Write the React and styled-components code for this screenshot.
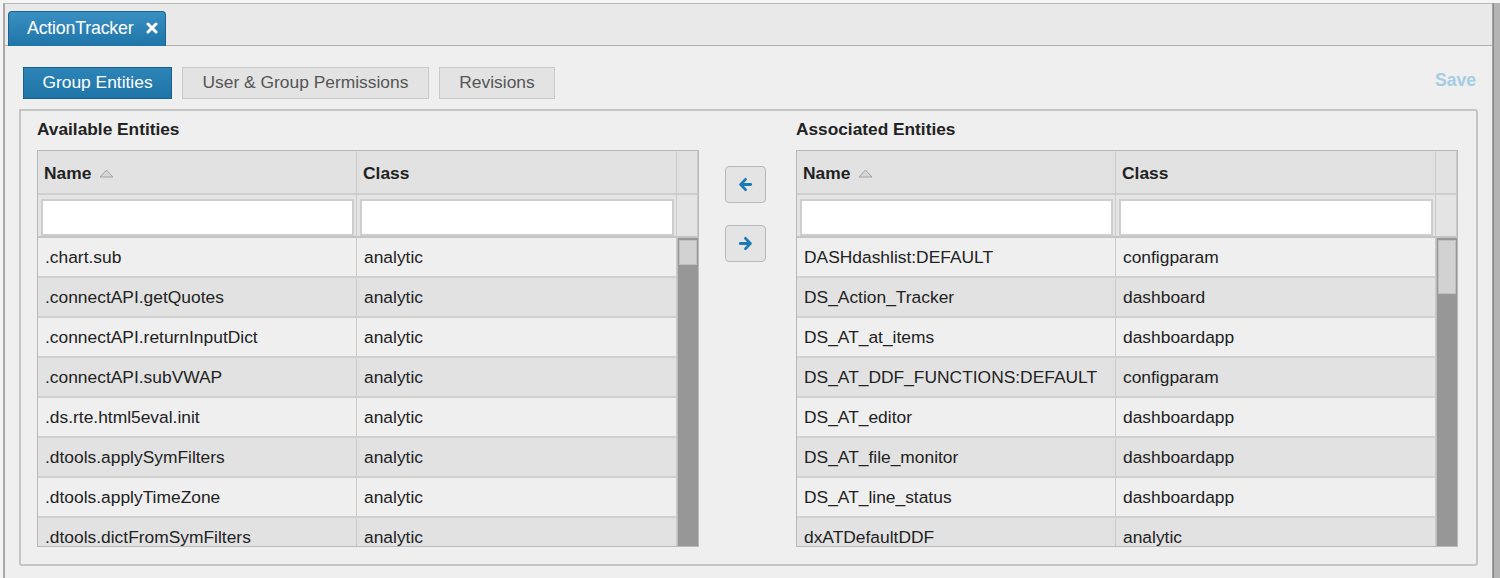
import styled, { createGlobalStyle } from "styled-components";

const GlobalStyle = createGlobalStyle`
  html, body {
    margin: 0;
    padding: 0;
    background: #f4f4f4;
  }
  body {
    font-family: "Liberation Sans", Arial, sans-serif;
    color: #222;
  }
`;

const Page = styled.div`
  display: flex;
  width: 1500px;
  height: 578px;
  padding: 3px 0 0 3px;
  box-sizing: border-box;
  overflow: hidden;
`;

const Frame = styled.div`
  width: 1490px;
  height: 600px;
  box-sizing: border-box;
  background: #efefef;
  border-top: 1px solid #b8b8b8;
  border-left: 2px solid #a9a9a9;
  border-right: 1px solid #a0a0a0;
`;

const RightEdge = styled.div`
  flex: 1;
  background: #b4b4b4;
  border-left: 1px solid #8a8a8a;
`;

const TabBar = styled.div`
  display: flex;
  align-items: flex-end;
  height: 42px;
  padding-left: 3px;
  background: #e9e9e9;
  border-bottom: 1px solid #b0b0b0;
  box-sizing: border-box;
`;

const Tab = styled.div`
  display: flex;
  align-items: center;
  gap: 13px;
  height: 35px;
  width: 158px;
  box-sizing: border-box;
  padding: 0 0 2px 18px;
  margin-bottom: -1px;
  border: 1px solid #1c628f;
  border-bottom: none;
  border-radius: 4px 4px 0 0;
  background: linear-gradient(#3a90c2, #1f74a8);
  color: #fff;
  font-size: 17.8px;
  letter-spacing: -0.2px;
`;

const Content = styled.div`
  padding: 20px 14px 0 14px;
`;

const TopRow = styled.div`
  display: flex;
  align-items: center;
  gap: 10px;
  padding-left: 4px;
  height: 33px;
`;

const SubTab = styled.div`
  width: ${(p) => p.$w}px;
  height: 32px;
  box-sizing: border-box;
  display: flex;
  align-items: center;
  justify-content: center;
  font-size: 17.4px;
  border: 1px solid ${(p) => (p.$active ? "#1b5f8c" : "#c9c9c9")};
  background: ${(p) => (p.$active ? "linear-gradient(#2d84b7, #1f74a8)" : "#e3e3e3")};
  color: ${(p) => (p.$active ? "#fff" : "#555")};
`;

const Save = styled.div`
  margin-left: auto;
  margin-right: 2px;
  margin-top: -5px;
  font-size: 17.6px;
  font-weight: bold;
  color: #a6cde3;
`;

const GroupBox = styled.div`
  margin-top: 10px;
  height: 457px;
  box-sizing: border-box;
  border: 2px solid #c4c4c4;
  border-radius: 0 3px 3px 3px;
  padding: 8px 16px 0 16px;
  display: flex;
`;

const Panel = styled.div`
  width: 662px;
  display: flex;
  flex-direction: column;
`;

const PanelTitle = styled.div`
  font-size: 17.3px;
  font-weight: bold;
  color: #222;
  height: 31px;
  line-height: 20px;
`;

const Table = styled.div`
  border: 1px solid #b9b9b9;
  display: grid;
  grid-template-columns: 319px 320px 21px;
  background: #efefef;
`;

const HeadCell = styled.div`
  height: 44px;
  box-sizing: border-box;
  display: flex;
  align-items: center;
  gap: 8px;
  padding: 2px 0 0 6px;
  font-size: 17.4px;
  font-weight: bold;
  background: #e2e2e2;
  border-right: 1px solid #cacaca;
  border-bottom: 2px solid #cfcfcf;
  &:last-child {
    border-right: none;
  }
`;

const FilterCell = styled.div`
  height: 43px;
  box-sizing: border-box;
  padding: 4px 2px 0 3px;
  background: #e4e4e4;
  border-right: 1px solid #cacaca;
  border-bottom: 2px solid #c4c4c4;
`;

const FilterInput = styled.input`
  width: 100%;
  height: 37px;
  box-sizing: border-box;
  border: 2px solid #cdcdcd;
  background: #fff;
  outline: none;
`;

const Body = styled.div`
  grid-column: 1 / 3;
  height: 308px;
  overflow: hidden;
  display: grid;
  grid-template-columns: 319px 320px;
  grid-auto-rows: 40px;
`;

const Cell = styled.div`
  display: flex;
  align-items: center;
  padding-left: 7px;
  font-size: 17.4px;
  color: #222;
  box-sizing: border-box;
  white-space: nowrap;
  background: ${(p) => (p.$even ? "#e2e2e2" : "#efefef")};
  border-right: 1px solid #cacaca;
  border-bottom: 2px solid #d0d0d0;
`;

const ScrollTrack = styled.div`
  height: 308px;
  display: flex;
  flex-direction: column;
  background: #979797;
  border-left: 1px solid #bdbdbd;
  box-sizing: border-box;
`;

const ScrollThumb = styled.div`
  height: ${(p) => p.$h}px;
  margin: 2px 1px 0 1px;
  background: #d2d2d2;
  border: 1px solid #c0c0c0;
  box-sizing: border-box;
`;

const Middle = styled.div`
  width: 97px;
  display: flex;
  flex-direction: column;
  align-items: center;
  padding-top: 47px;
  padding-right: 4px;
  box-sizing: border-box;
  gap: 22px;
`;

const MoveButton = styled.div`
  width: 41px;
  height: 37px;
  box-sizing: border-box;
  border: 1px solid #b8b8b8;
  border-radius: 4px;
  background: #e4e4e4;
  display: flex;
  align-items: center;
  justify-content: center;
`;

const Arrow = ({ dir }) => (
  <svg width="15" height="15" viewBox="0 0 16 16">
    <g
      transform={dir === "right" ? "rotate(180 8 8)" : undefined}
      fill="none"
      stroke="#1c7bb4"
      strokeWidth="3"
      strokeLinecap="round"
      strokeLinejoin="round"
    >
      <path d="M8 2.5 L2.8 8 L8 13.5" />
      <path d="M3.5 8 H13.5" />
    </g>
  </svg>
);

const CloseIcon = () => (
  <svg width="12" height="12" viewBox="0 0 12 12">
    <path
      d="M2 2 L10 10 M10 2 L2 10"
      stroke="#fff"
      strokeWidth="3"
      strokeLinecap="round"
    />
  </svg>
);

const SortIcon = () => (
  <svg width="15" height="9" viewBox="0 0 15 9">
    <path d="M7.5 1 L14 8 H1 Z" fill="#d6d6d6" stroke="#a5a5a5" strokeWidth="1" />
  </svg>
);

const available = [
  [".chart.sub", "analytic"],
  [".connectAPI.getQuotes", "analytic"],
  [".connectAPI.returnInputDict", "analytic"],
  [".connectAPI.subVWAP", "analytic"],
  [".ds.rte.html5eval.init", "analytic"],
  [".dtools.applySymFilters", "analytic"],
  [".dtools.applyTimeZone", "analytic"],
  [".dtools.dictFromSymFilters", "analytic"],
];

const associated = [
  ["DASHdashlist:DEFAULT", "configparam"],
  ["DS_Action_Tracker", "dashboard"],
  ["DS_AT_at_items", "dashboardapp"],
  ["DS_AT_DDF_FUNCTIONS:DEFAULT", "configparam"],
  ["DS_AT_editor", "dashboardapp"],
  ["DS_AT_file_monitor", "dashboardapp"],
  ["DS_AT_line_status", "dashboardapp"],
  ["dxATDefaultDDF", "analytic"],
];

const EntityTable = ({ title, rows, thumb }) => (
  <Panel>
    <PanelTitle>{title}</PanelTitle>
    <Table>
      <HeadCell>
        Name <SortIcon />
      </HeadCell>
      <HeadCell>Class</HeadCell>
      <HeadCell />
      <FilterCell>
        <FilterInput />
      </FilterCell>
      <FilterCell>
        <FilterInput />
      </FilterCell>
      <FilterCell />
      <Body>
        {rows.map(([name, cls], i) => [
          <Cell key={name} $even={i % 2 === 1}>
            {name}
          </Cell>,
          <Cell key={name + "-c"} $even={i % 2 === 1}>
            {cls}
          </Cell>,
        ])}
      </Body>
      <ScrollTrack>
        <ScrollThumb $h={thumb} />
      </ScrollTrack>
    </Table>
  </Panel>
);

const App = () => {
  return (
    <>
      <GlobalStyle />
      <Page>
        <Frame>
          <TabBar>
            <Tab>
              ActionTracker <CloseIcon />
            </Tab>
          </TabBar>
          <Content>
            <TopRow>
              <SubTab $active $w={149}>Group Entities</SubTab>
              <SubTab $w={247}>User &amp; Group Permissions</SubTab>
              <SubTab $w={116}>Revisions</SubTab>
              <Save>Save</Save>
            </TopRow>
            <GroupBox>
              <EntityTable title="Available Entities" rows={available} thumb={25} />
              <Middle>
                <MoveButton>
                  <Arrow dir="left" />
                </MoveButton>
                <MoveButton>
                  <Arrow dir="right" />
                </MoveButton>
              </Middle>
              <EntityTable title="Associated Entities" rows={associated} thumb={54} />
            </GroupBox>
          </Content>
        </Frame>
        <RightEdge />
      </Page>
    </>
  );
};

export default App;
